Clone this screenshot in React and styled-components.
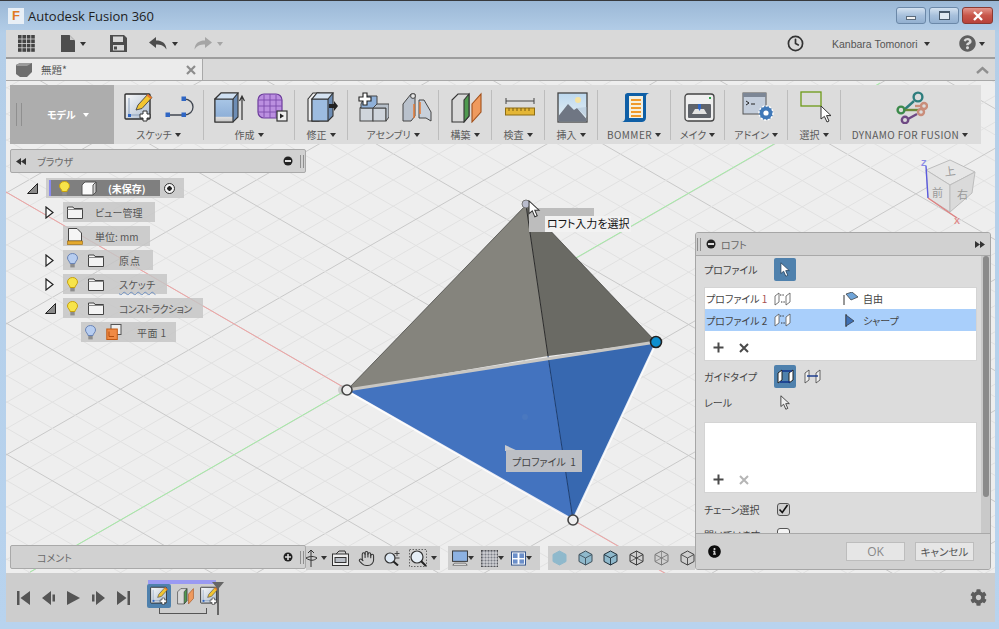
import React from "react";
import styled, { createGlobalStyle } from "styled-components";
import { FaCog, FaInfoCircle, FaQuestionCircle } from "react-icons/fa";
import { Clock, Hand } from "lucide-react";

const JP = `"Noto Sans CJK JP", "Noto Sans", sans-serif`;

const GlobalStyle = createGlobalStyle`
    html, body { margin: 0; padding: 0; background: #b8d3ee; }
    * { box-sizing: border-box; }
    body { font-family: ${JP}; font-feature-settings: "palt"; overflow: hidden; }
`;

/* ---------- small drawings ---------- */

function Caret({ dim }) {
    return <CaretMark $dim={dim} />;
}

function Plus({ dim }) {
    const c = dim ? "#b5b5b5" : "#4a4a4a";
    return (
        <svg width="11" height="11" viewBox="0 0 11 11">
            <path d="M5.5 0.5V10.5M0.5 5.5H10.5" stroke={c} strokeWidth="2" />
        </svg>
    );
}

function Cross({ dim }) {
    const c = dim ? "#b5b5b5" : "#4a4a4a";
    return (
        <svg width="10" height="10" viewBox="0 0 10 10">
            <path d="M1 1L9 9M9 1L1 9" stroke={c} strokeWidth="2" />
        </svg>
    );
}

function MinusDot() {
    return (
        <svg width="10" height="10" viewBox="0 0 10 10">
            <circle cx="5" cy="5" r="4.5" fill="#222" />
            <rect x="2" y="4" width="6" height="2" fill="#ddd" />
        </svg>
    );
}

function PlusDot() {
    return (
        <svg width="10" height="10" viewBox="0 0 10 10">
            <circle cx="5" cy="5" r="4.5" fill="#222" />
            <path d="M5 2V8M2 5H8" stroke="#ddd" strokeWidth="1.6" />
        </svg>
    );
}

function Arrows({ left }) {
    return (
        <svg width="10" height="7" viewBox="0 0 10 7">
            <path d={left ? "M5 0V7L0 3.5ZM10 0V7L5 3.5Z" : "M0 0V7L5 3.5ZM5 0V7L10 3.5Z"} fill="#333" />
        </svg>
    );
}

function Pointer({ fill = "#fff", stroke = "#333", size = 14 }) {
    return (
        <svg width={size} height={size * 1.4} viewBox="0 0 14 20">
            <path d="M1 1V15L4.6 12L7.4 18.5L10 17.4L7.3 11.2H12Z" fill={fill} stroke={stroke} strokeWidth="1.1" />
        </svg>
    );
}

function AppsIcon() {
    const cells = [];
    for (let r = 0; r < 4; r++) {
        for (let c = 0; c < 4; c++) {
            cells.push(<rect key={`${r}-${c}`} x={c * 4.4} y={r * 4.4} width="3.6" height="3.6" fill="#444" />);
        }
    }
    return <svg width="17" height="17" viewBox="0 0 17 17">{cells}</svg>;
}

function FileIcon() {
    return (
        <svg width="14" height="17" viewBox="0 0 14 17">
            <path d="M0 0H8.5L14 5.5V17H0Z" fill="#4d4d4d" />
            <path d="M9 0.5L13.5 5H9Z" fill="#c9c9c9" />
        </svg>
    );
}

function SaveIcon() {
    return (
        <svg width="17" height="17" viewBox="0 0 17 17">
            <path d="M0 0H14L17 3V17H0Z" fill="#4d4d4d" />
            <rect x="3" y="1.5" width="10" height="5.5" fill="#d8d8d8" />
            <rect x="3" y="10" width="11" height="5.5" fill="#d8d8d8" />
            <rect x="4" y="11.5" width="3" height="3" fill="#4d4d4d" />
        </svg>
    );
}

function UndoIcon({ redo, dim }) {
    return (
        <svg width="18" height="13" viewBox="0 0 18 13" style={redo ? { transform: "scaleX(-1)" } : undefined}>
            <path d="M7 0V3.5C13 3.5 17 6 17.5 12.5C15 8.5 12 7.5 7 7.5V11L0 5.5Z" fill={dim ? "#a5a5a5" : "#4d4d4d"} />
        </svg>
    );
}

function SketchIcon({ size = 30 }) {
    return (
        <svg width={size} height={size} viewBox="0 0 30 30">
            <defs>
                <linearGradient id="skf" x1="0" y1="0" x2="1" y2="1">
                    <stop offset="0" stopColor="#fafafa" />
                    <stop offset="1" stopColor="#a9b9cd" />
                </linearGradient>
            </defs>
            <rect x="1" y="2" width="25" height="25" fill="url(#skf)" stroke="#2f2f2f" strokeWidth="1.4" rx="1" />
            <path d="M5 6V23H21" fill="none" stroke="#8aa0bd" strokeWidth="1" />
            <path d="M12 18L14 13L24 2L28 5.5L18 16.5Z" fill="#f2c531" stroke="#444" strokeWidth="0.9" />
            <path d="M24 2L28 5.5L26.5 7L22.5 3.6Z" fill="#e8762c" />
            <rect x="4" y="22" width="3" height="3" fill="#2f66c4" />
            <path d="M19 19H23V22H26V26H23V29H19V26H16V22H19Z" fill="#fff" stroke="#333" strokeWidth="1" />
        </svg>
    );
}

function ArcIcon() {
    return (
        <svg width="32" height="22" viewBox="0 0 32 22">
            <path d="M3 19H19C31 19 31 3 19 3" fill="none" stroke="#404650" strokeWidth="1.3" />
            <rect x="0.5" y="16.5" width="4.5" height="4.5" fill="#2f66c4" />
            <rect x="16.5" y="16.5" width="4.5" height="4.5" fill="#2f66c4" />
            <rect x="16.5" y="0.5" width="4.5" height="4.5" fill="#2f66c4" />
        </svg>
    );
}

function ExtrudeIcon() {
    return (
        <svg width="31" height="31" viewBox="0 0 31 31">
            <defs>
                <linearGradient id="exf" x1="0" y1="0" x2="0" y2="1">
                    <stop offset="0" stopColor="#a9c6e6" />
                    <stop offset="0.75" stopColor="#8fb0d8" />
                    <stop offset="0.8" stopColor="#dcdcdc" />
                    <stop offset="1" stopColor="#c4c4c4" />
                </linearGradient>
            </defs>
            <path d="M1 7L7 1H24V25L19 30H1Z" fill="#6d8db5" stroke="#333" strokeWidth="1.1" />
            <path d="M1 7H19V30H1Z" fill="url(#exf)" stroke="#333" strokeWidth="1.1" />
            <path d="M1 7L7 1H24L19 7Z" fill="#cfe0f2" stroke="#333" strokeWidth="1.1" />
            <path d="M28 28V5M25.5 9L28 4L30.5 9" fill="none" stroke="#333" strokeWidth="1.2" />
        </svg>
    );
}

function MeshIcon() {
    return (
        <svg width="31" height="29" viewBox="0 0 31 29">
            <rect x="1" y="1" width="24" height="24" rx="6" fill="#bb8fe0" stroke="#6d3d9c" strokeWidth="1.2" />
            <path d="M7 2V24M13 1V25M19 2V24M1 7H25M1 13H25M1 19H25" stroke="#7d4cab" strokeWidth="0.9" />
            <rect x="20" y="18" width="10" height="10" fill="#eee" stroke="#333" strokeWidth="1.2" />
            <path d="M23 20.5V25.5L27 23Z" fill="#222" />
        </svg>
    );
}

function PressIcon() {
    return (
        <svg width="31" height="30" viewBox="0 0 31 30">
            <path d="M1 7L6 1H12V29H1Z" fill="#eee" stroke="#333" strokeWidth="1.1" />
            <path d="M5 7L10 1H26V24L21 29H5Z" fill="#6d8db5" stroke="#333" strokeWidth="1.1" />
            <rect x="5" y="7" width="16" height="22" fill="#9dbce0" stroke="#333" strokeWidth="1.1" />
            <path d="M5 7L10 1H26L21 7Z" fill="#d5e3f2" stroke="#333" strokeWidth="1.1" />
            <path d="M22 12H27V9L31 14L27 19V16H22Z" fill="#222" />
        </svg>
    );
}

function ComponentIcon() {
    return (
        <svg width="31" height="30" viewBox="0 0 31 30">
            <path d="M2 16L6 12H17V16H2Z" fill="#dfe6ee" stroke="#444" />
            <rect x="2" y="16" width="13" height="13" fill="#cfd5dc" stroke="#444" />
            <rect x="15" y="16" width="13" height="13" fill="#cfd5dc" stroke="#444" />
            <path d="M15 16L19 12H31V25L28 29V16Z" fill="#b7c0ca" stroke="#444" />
            <path d="M3 12L7 4H19V12L15 16H3Z" fill="#8fb0d8" stroke="#444" />
            <path d="M5 1H9V5H13V9H9V13H5V9H1V5H5Z" fill="#fff" stroke="#222" strokeWidth="1.1" />
        </svg>
    );
}

function JointIcon() {
    return (
        <svg width="30" height="30" viewBox="0 0 30 30">
            <path d="M1 12L9 2H13V24L9 29H1Z" fill="#b9c1cc" stroke="#444" />
            <path d="M17 8L22 8L29 20V29L24 26L17 26Z" fill="#c8d0da" stroke="#444" />
            <circle cx="11" cy="4" r="2.4" fill="#e8e8e8" stroke="#444" />
            <path d="M12 12V26M18 10V22" stroke="#e8762c" strokeWidth="1.4" />
        </svg>
    );
}

function PlaneIcon({ small }) {
    const s = small ? 17 : 31;
    return (
        <svg width={s} height={small ? 22 : 31} viewBox="0 0 31 31">
            <path d="M1 8L7 2H18V24L13 30H1Z" fill="#d9d9d9" stroke="#333" strokeWidth="1.1" />
            <path d="M13 8L18 2V24L13 30Z" fill="#4f9a4f" stroke="#333" strokeWidth="1.1" />
            <path d="M21 12L30 2V20L21 30Z" fill="#ef9a5e" stroke="#a3501a" strokeWidth="1.1" />
        </svg>
    );
}

function RulerIcon() {
    return (
        <svg width="30" height="18" viewBox="0 0 30 18">
            <path d="M1 0V6M1 3H29M29 0V6" stroke="#444" strokeWidth="1" />
            <rect x="0.5" y="10" width="29" height="7" fill="#e4b636" stroke="#8e6d12" />
            <path d="M4 10V13M8 10V13M12 10V13M16 10V13M20 10V13M24 10V13" stroke="#7b5d10" />
        </svg>
    );
}

function ImageIcon() {
    return (
        <svg width="31" height="31" viewBox="0 0 31 31">
            <defs>
                <linearGradient id="sky" x1="0" y1="0" x2="0" y2="1">
                    <stop offset="0" stopColor="#bcd8ee" />
                    <stop offset="1" stopColor="#e9f1f4" />
                </linearGradient>
            </defs>
            <rect x="1" y="1" width="29" height="29" fill="url(#sky)" stroke="#444" strokeWidth="1.3" />
            <circle cx="21" cy="8" r="3" fill="#f6e3a0" />
            <path d="M1.5 29.5V24L11 12L17 18L20 16L29.5 27V29.5Z" fill="#6f7683" />
            <path d="M20 16L29.5 25V15Z" fill="#b3c6d8" opacity="0.6" />
        </svg>
    );
}

function ScrollIcon() {
    return (
        <svg width="32" height="31" viewBox="0 0 32 31">
            <path d="M5 26V4C5 1 7 1 9 1H31C27 1 26 3 26 5V25C26 29 24 30 21 30H1C4 30 5 28 5 26Z" fill="#0f5fa6" />
            <rect x="9" y="4" width="14" height="22" fill="#f5f0df" />
            <path d="M11 8H21M11 12H21M11 16H21M11 20H21M11 24H21" stroke="#f09a2b" strokeWidth="2" />
        </svg>
    );
}

function PrinterIcon() {
    return (
        <svg width="31" height="29" viewBox="0 0 31 29">
            <rect x="1" y="1" width="29" height="27" rx="3" fill="#efefef" stroke="#444" strokeWidth="1.3" />
            <rect x="4" y="11" width="23" height="14" rx="1" fill="#5f636a" />
            <path d="M8 21L11 16H20L23 21Z" fill="#e2e2e2" />
            <rect x="14" y="11" width="3" height="5" fill="#2f66c4" />
            <path d="M14 15L15.5 18L17 15Z" fill="#2f66c4" />
            <rect x="25" y="4" width="2" height="2" fill="#2fa14a" />
        </svg>
    );
}

function AddinIcon() {
    return (
        <svg width="32" height="30" viewBox="0 0 32 30">
            <rect x="1" y="1" width="23" height="21" fill="#c4cedc" stroke="#555" />
            <rect x="1" y="1" width="23" height="4" fill="#7d8796" />
            <path d="M4 9L7 11L4 13M9 12H13" fill="none" stroke="#222" />
            <circle cx="24" cy="21" r="7" fill="#3f78b8" />
            <circle cx="24" cy="21" r="7" fill="none" stroke="#fff" strokeDasharray="2 1.6" strokeWidth="1.4" />
            <circle cx="24" cy="21" r="2.6" fill="#fff" />
        </svg>
    );
}

function SelectIcon() {
    return (
        <svg width="32" height="33" viewBox="0 0 32 33">
            <rect x="1" y="1" width="20" height="14" fill="none" stroke="#6d9a18" strokeWidth="1.3" />
            <path d="M21 15V28L24.4 25.4L27 31L29 30L26.5 24.6H31Z" fill="#fff" stroke="#333" />
        </svg>
    );
}

function DynamoIcon() {
    return (
        <svg width="33" height="33" viewBox="0 0 33 33">
            <g fill="none" strokeWidth="2.4">
                <path d="M19 10L9 19" stroke="#2e7d7d" />
                <circle cx="23" cy="6" r="4.4" stroke="#2e7d7d" />
                <path d="M9 19H24" stroke="#6d8a3a" />
                <circle cx="6" cy="19" r="3.4" stroke="#3c8a4a" />
                <path d="M26 15H20" stroke="#c98d7a" />
                <circle cx="29" cy="15" r="3" stroke="#c98d7a" />
                <circle cx="26" cy="21" r="3" stroke="#c98d7a" />
                <path d="M22 23L13 28" stroke="#6f4a84" />
                <circle cx="10" cy="29" r="3.2" stroke="#6f4a84" />
            </g>
        </svg>
    );
}

function Bulb({ on }) {
    const f = on ? "#f7e44a" : "#b7cdf0";
    const s = on ? "#c7a10f" : "#6a84b5";
    return (
        <svg width="11" height="15" viewBox="0 0 11 15">
            <path d="M5.5 0.5C8.5 0.5 10.5 2.5 10.5 5C10.5 7.5 8 8.5 8 10.5H3C3 8.5 0.5 7.5 0.5 5C0.5 2.5 2.5 0.5 5.5 0.5Z" fill={f} stroke={s} />
            <rect x="3.3" y="11" width="4.4" height="3.4" fill="#8d8d8d" />
        </svg>
    );
}

function Folder() {
    return (
        <svg width="16" height="13" viewBox="0 0 16 13">
            <path d="M0.5 12.5V1H6L7 2.5H15.5V12.5Z" fill="#f3f3f3" stroke="#444" />
            <path d="M0.5 3.5H15.5" stroke="#888" />
        </svg>
    );
}

function TreeCube() {
    return (
        <svg width="16" height="15" viewBox="0 0 16 15">
            <path d="M1 4L4 1H15V11L12 14H1Z" fill="#fafafa" stroke="#555" />
            <path d="M12 4L15 1V11L12 14Z" fill="#cfcfcf" stroke="#555" />
        </svg>
    );
}

function Units() {
    return (
        <svg width="16" height="17" viewBox="0 0 16 17">
            <path d="M1.5 0.5H10L14.5 5V13H1.5Z" fill="#f5f5f5" stroke="#444" />
            <rect x="0.5" y="13" width="15" height="3.5" fill="#e4a92d" stroke="#a0701a" strokeWidth="0.7" />
        </svg>
    );
}

function PlaneTree() {
    return (
        <svg width="16" height="16" viewBox="0 0 16 16">
            <rect x="5" y="0.5" width="10" height="10" fill="#eee" stroke="#555" />
            <rect x="0.8" y="5" width="10.5" height="10.5" fill="#f08a44" stroke="#c25a14" />
            <path d="M3 7.5V12.5H8" fill="none" stroke="#b34f10" />
        </svg>
    );
}

function Expander({ open }) {
    if (open) {
        return (
            <svg width="11" height="11" viewBox="0 0 11 11">
                <path d="M0.5 10.5L10.5 0.5V10.5Z" fill="#8a8a8a" stroke="#222" />
            </svg>
        );
    }
    return (
        <svg width="9" height="13" viewBox="0 0 9 13">
            <path d="M1 1L8 6.5L1 12Z" fill="#fafafa" stroke="#222" strokeWidth="1.2" />
        </svg>
    );
}

function LoftFaces() {
    return (
        <svg width="17" height="14" viewBox="0 0 17 14">
            <path d="M1 4L5 1V10L1 13ZM12 4L16 1V10L12 13Z" fill="#fff" stroke="#555" strokeWidth="0.8" />
            <path d="M6 3H10M7 10H11" stroke="#333" strokeDasharray="1.4 1" />
        </svg>
    );
}

function TangentFree() {
    return (
        <svg width="16" height="14" viewBox="0 0 16 14">
            <path d="M1 3V13" stroke="#333" />
            <path d="M3 2L9 0L15 5L8 8Z" fill="#6fa4d8" stroke="#333" strokeWidth="0.7" />
        </svg>
    );
}

function TangentSharp() {
    return (
        <svg width="14" height="15" viewBox="0 0 14 15">
            <path d="M3 1V14" stroke="#333" />
            <path d="M3 2L11 8L3 13Z" fill="#3f70b5" stroke="#333" strokeWidth="0.7" />
        </svg>
    );
}

function RailsGuide() {
    return (
        <svg width="17" height="17" viewBox="0 0 17 17">
            <path d="M1 5L5 2V12L1 15ZM12 5L16 2V12L12 15Z" fill="#fff" stroke="#222" />
            <path d="M5 3H15M3 14H13" stroke="#12348c" strokeWidth="1.4" />
        </svg>
    );
}

function CenterGuide() {
    return (
        <svg width="17" height="15" viewBox="0 0 17 15">
            <path d="M1 4L5 1V11L1 14ZM12 4L16 1V11L12 14Z" fill="#eee" stroke="#444" strokeWidth="0.8" />
            <path d="M3 7H14" stroke="#12348c" strokeWidth="1.4" />
        </svg>
    );
}

function LookAt() {
    return (
        <svg width="17" height="16" viewBox="0 0 17 16">
            <rect x="0.5" y="4" width="16" height="11.5" fill="#eee" stroke="#333" />
            <rect x="3" y="7.5" width="11" height="5" fill="#b9bec6" stroke="#333" />
            <path d="M4 4L7 1H13L14 4" fill="none" stroke="#333" />
        </svg>
    );
}

function Orbit() {
    return (
        <svg width="11" height="19" viewBox="0 0 11 19">
            <path d="M5 1V18M2 4L5 1L8 4M0 9C4 7 8 7 11 9C8 12 4 12 0 9Z" fill="none" stroke="#333" />
        </svg>
    );
}

function ZoomPlus() {
    return (
        <svg width="16" height="16" viewBox="0 0 16 16">
            <circle cx="6" cy="8" r="5" fill="#dfeaf5" stroke="#333" strokeWidth="1.2" />
            <path d="M9.5 11.5L14 15.5" stroke="#222" strokeWidth="2" />
            <path d="M13 1V6M10.5 3.5H15.5M10.5 8H15.5" stroke="#444" />
        </svg>
    );
}

function ZoomFit() {
    return (
        <svg width="18" height="18" viewBox="0 0 18 18">
            <rect x="0.5" y="0.5" width="17" height="17" fill="none" stroke="#666" strokeDasharray="1.5 1.5" />
            <circle cx="8" cy="8" r="6" fill="#e5eef6" stroke="#333" strokeWidth="1.2" />
            <path d="M12 12L17 17" stroke="#222" strokeWidth="2" />
        </svg>
    );
}

function Monitor() {
    return (
        <svg width="16" height="18" viewBox="0 0 20 19">
            <rect x="0.7" y="0.7" width="18.6" height="13" fill="#8db2e2" stroke="#333" strokeWidth="1.2" />
            <path d="M3 16H17L19 18.5H1Z" fill="#fff" stroke="#333" strokeWidth="0.8" />
        </svg>
    );
}

function GridDisplay() {
    const lines = [];
    for (let i = 3; i < 17; i += 3) {
        lines.push(<path key={i} d={`M${i} 0V17M0 ${i}H17`} stroke="#fff" strokeWidth="0.7" />);
    }
    return (
        <svg width="17" height="17" viewBox="0 0 17 17">
            <rect width="17" height="17" fill="#7c7f87" stroke="#333" />
            {lines}
        </svg>
    );
}

function Viewports() {
    return (
        <svg width="15" height="15" viewBox="0 0 16 15">
            <rect x="0.5" y="0.5" width="15" height="14" fill="#fff" stroke="#2c4f8a" />
            <rect x="2" y="2" width="5" height="5" fill="#6b8fca" />
            <rect x="9" y="2" width="5" height="5" fill="#6b8fca" />
            <rect x="2" y="8.5" width="5" height="4.5" fill="#6b8fca" />
            <rect x="9" y="8.5" width="5" height="4.5" fill="#6b8fca" />
        </svg>
    );
}

function VisualCube({ fill, edge, hidden }) {
    return (
        <svg width="15" height="16" viewBox="0 0 15 16">
            <path d="M7.5 1L14 4.5V11.5L7.5 15L1 11.5V4.5Z" fill={fill} stroke={edge} strokeWidth="1" />
            <path d="M1 4.5L7.5 8L14 4.5M7.5 8V15" fill="none" stroke={edge} strokeWidth="0.9" />
            {hidden && <path d="M7.5 1V8M1 11.5L7.5 8L14 11.5" fill="none" stroke={edge} strokeWidth="0.7" />}
        </svg>
    );
}

function Playback({ d }) {
    return (
        <svg width="13" height="14" viewBox="0 0 13 14">
            <path d={d} fill="#555" />
        </svg>
    );
}

/* ---------- viewport drawing ---------- */

function gridLines() {
    const items = [];
    const red = 188.5;
    const green = 589.5;
    const step = 26.2;
    for (let k = -40; k <= 40; k++) {
        const major = k % 5 === 0;
        const stroke = major ? "#c9c9c9" : "#e1e1e1";
        const a = red + k * step;
        const b = green + k * step;
        items.push(<line key={`a${k}`} x1="6" y1={a + 0.578 * 6} x2="995" y2={a + 0.578 * 995} stroke={stroke} />);
        items.push(<line key={`b${k}`} x1="6" y1={b - 0.575 * 6} x2="995" y2={b - 0.575 * 995} stroke={stroke} />);
    }
    return items;
}

function Scene() {
    return (
        <SceneSvg viewBox="6 81 989 492">
            {gridLines()}
            <line x1="6" y1="192" x2="680" y2="582" stroke="#f2a3a3" />
            <line x1="30" y1="572" x2="880" y2="83" stroke="#a5eda5" />

            <path d="M347 390L526 205L548 356Z" fill="#85847d" />
            <path d="M526 205L656 342L548 356Z" fill="#6a6a64" />
            <path d="M347 390L526 205L656 342" fill="none" stroke="#3c3c3a" strokeWidth="0.7" />
            <path d="M347 390L548 358L573 520Z" fill="#4373bf" />
            <path d="M548 358L656 342L573 520Z" fill="#3768b0" />
            <path d="M347 391L573 520L656 343" fill="none" stroke="#fff" strokeWidth="2.2" opacity="0.85" />
            <path d="M526 205L548 356" stroke="#2b2b2b" strokeWidth="1" />
            <path d="M548 356L573 520" stroke="#1c3d70" strokeWidth="1" />
            <path d="M347 390L656 342" stroke="#c9c7c3" strokeWidth="3" />
            <circle cx="525" cy="417" r="3" fill="#4a78bf" />

            <circle cx="526" cy="204" r="4" fill="#b9bccd" stroke="#777" />
            <circle cx="343" cy="390" r="5" fill="#bbb" opacity="0.6" />
            <circle cx="347" cy="390" r="5" fill="#eee" stroke="#444" strokeWidth="1.6" />
            <circle cx="573" cy="520" r="5" fill="#eee" stroke="#444" strokeWidth="1.6" />
            <circle cx="656" cy="342" r="5.5" fill="#0e8fd0" stroke="#222" strokeWidth="1.6" />

            <path d="M505 445L518 451H505Z" fill="#c8cacf" />

            {/* view cube */}
            <path d="M926 170L950 160L975 172L950 185Z" fill="#e6e6e6" stroke="#bdbdbd" />
            <path d="M926 170L950 185V212L928 198Z" fill="#e2e2e2" stroke="#bdbdbd" />
            <path d="M950 185L975 172L972 193L950 212Z" fill="#dadada" stroke="#bdbdbd" />
            <path d="M926 166L928 198" stroke="#5a5ae0" strokeWidth="1.4" />
            <path d="M928 198L957 218" stroke="#e08080" strokeWidth="1.4" />
            <CubeText x="945" y="176" transform="rotate(-8 945 176)">上</CubeText>
            <CubeText x="932" y="197">前</CubeText>
            <CubeText x="957" y="199">右</CubeText>
            <AxisText x="921" y="166" fill="#8a8ae6">Z</AxisText>
            <AxisText x="954" y="224" fill="#e08a8a">X</AxisText>
        </SceneSvg>
    );
}

/* ---------- data ---------- */

const toolGroups = [
    { label: "スケッチ", width: 89, icons: [<SketchIcon key="a" />, <ArcIcon key="b" />], gap: 11 },
    { label: "作成", width: 90, icons: [<ExtrudeIcon key="a" />, <MeshIcon key="b" />], gap: 12 },
    { label: "修正", width: 52, icons: [<PressIcon key="a" />] },
    { label: "アセンブリ", width: 90, icons: [<ComponentIcon key="a" />, <JointIcon key="b" />], gap: 13 },
    { label: "構築", width: 52, icons: [<PlaneIcon key="a" />] },
    { label: "検査", width: 52, icons: [<RulerIcon key="a" />] },
    { label: "挿入", width: 52, icons: [<ImageIcon key="a" />] },
    { label: "BOMMER", width: 72, icons: [<ScrollIcon key="a" />], latin: true },
    { label: "メイク", width: 53, icons: [<PrinterIcon key="a" />] },
    { label: "アドイン", width: 62, icons: [<AddinIcon key="a" />] },
    { label: "選択", width: 52, icons: [<SelectIcon key="a" />] },
    { label: "DYNAMO FOR FUSION", width: 138, icons: [<DynamoIcon key="a" />], latin: true },
];

const treeRows = [
    { level: 0, expander: "open", root: true },
    { level: 1, expander: "closed", icons: [<Folder key="f" />], label: "ビュー管理", lead: 2, end: 13 },
    { level: 1, icons: [<Units key="f" />], label: "単位: mm", lead: 2, end: 11 },
    { level: 1, expander: "closed", icons: [<Bulb key="b" />, <Folder key="f" />], label: "原点", track: 1, end: 12 },
    { level: 1, expander: "closed", icons: [<Bulb key="b" on />, <Folder key="f" />], label: "スケッチ", track: 0.3, wavy: true, end: 11 },
    { level: 1, expander: "open", icons: [<Bulb key="b" on />, <Folder key="f" />], label: "コンストラクション", track: -0.6, end: 11 },
    { level: 2, icons: [<Bulb key="b" />, <PlaneTree key="f" />], label: "平面 1", track: 0.4, end: 10 },
];

const visualCubes = [
    { fill: "#8fb9cc", edge: "#8fb9cc" },
    { fill: "#8fb9cc", edge: "#3d4f5a" },
    { fill: "#8fb9cc", edge: "#1f2f3a" },
    { fill: "none", edge: "#333", hidden: true },
    { fill: "none", edge: "#777", hidden: true },
    { fill: "none", edge: "#444" },
];

/* ---------- page ---------- */

export default function App() {
    return (
        <Window>
            <GlobalStyle />
            <TitleBar>
                <AppBadge>F</AppBadge>
                <AppName>Autodesk Fusion 360</AppName>
                <WinButtons>
                    <WinButton>
                        <MinGlyph />
                    </WinButton>
                    <WinButton>
                        <MaxGlyph />
                    </WinButton>
                    <WinButton $close>
                        <svg width="12" height="10" viewBox="0 0 12 10">
                            <path d="M2 1L10 9M10 1L2 9" stroke="#fff" strokeWidth="2.4" />
                        </svg>
                    </WinButton>
                </WinButtons>
            </TitleBar>

            <Client>
                <MenuRow>
                    <MenuCell $w={43}><AppsIcon /></MenuCell>
                    <MenuCell $w={49}><FileIcon /><Caret /></MenuCell>
                    <MenuCell $w={39}><SaveIcon /></MenuCell>
                    <MenuCell $w={45}><UndoIcon /><Caret /></MenuCell>
                    <MenuCell $w={40}><UndoIcon redo dim /><Caret dim /></MenuCell>
                    <MenuRight>
                        <Clock size={17} color="#333" strokeWidth={2.4} />
                        <UserName>Kanbara Tomonori</UserName>
                        <Caret />
                        <HelpCell>
                            <FaQuestionCircle size={17} color="#5f5f5f" />
                            <Caret />
                        </HelpCell>
                    </MenuRight>
                </MenuRow>

                <TabRow>
                    <DocTab>
                        <svg width="16" height="14" viewBox="0 0 16 14">
                            <path d="M0 2L4 0H16V9L11 14H4L0 11Z" fill="#6e6e6e" />
                            <path d="M0 2L4 0H16L11 3H1Z" fill="#9b9b9b" />
                        </svg>
                        <DocName>無題*</DocName>
                        <DocClose>
                            <svg width="10" height="10" viewBox="0 0 10 10">
                                <path d="M1 1L9 9M9 1L1 9" stroke="#8c8c8c" strokeWidth="2.2" />
                            </svg>
                        </DocClose>
                    </DocTab>
                    <TabFill>
                        <svg width="13" height="8" viewBox="0 0 13 8">
                            <path d="M1 7L6.5 2L12 7" fill="none" stroke="#8f8f8f" strokeWidth="2.4" />
                        </svg>
                    </TabFill>
                </TabRow>

                <Viewport>
                    <Scene />

                    <ToolBar>
                        <ModeButton>
                            <Grip />
                            <ModeLabel>モデル</ModeLabel>
                            <Caret />
                        </ModeButton>
                        {toolGroups.map((g, i) => (
                            <React.Fragment key={g.label}>
                                {i > 0 && <ToolSep />}
                                <ToolGroup $w={g.width}>
                                    <ToolIcons $gap={g.gap}>{g.icons}</ToolIcons>
                                    <ToolLabel $latin={g.latin}>
                                        {g.label}
                                        <Caret />
                                    </ToolLabel>
                                </ToolGroup>
                            </React.Fragment>
                        ))}
                    </ToolBar>

                    <BrowserPane>
                        <DockBar>
                            <Arrows left />
                            <DockTitle>ブラウザ</DockTitle>
                            <DockEnd>
                                <MinusDot />
                                <Grip />
                            </DockEnd>
                        </DockBar>
                        <Tree>
                            {treeRows.map((row, i) =>
                                row.root ? (
                                    <TreeRow key={i} $level={0}>
                                        <ExpanderSlot><Expander open /></ExpanderSlot>
                                        <RootChip>
                                            <RootInner>
                                                <Bulb on />
                                                <TreeCube />
                                                <RootName>(未保存)</RootName>
                                            </RootInner>
                                            <RadioDot />
                                        </RootChip>
                                    </TreeRow>
                                ) : (
                                    <TreeRow key={i} $level={row.level}>
                                        <ExpanderSlot>
                                            {row.expander && <Expander open={row.expander === "open"} />}
                                        </ExpanderSlot>
                                        <TreeChip $end={row.end}>
                                            {row.icons}
                                            <TreeName $wavy={row.wavy} $lead={row.lead} $track={row.track}>
                                                {row.label}
                                            </TreeName>
                                        </TreeChip>
                                    </TreeRow>
                                )
                            )}
                        </Tree>
                    </BrowserPane>

                    <BottomRow>
                        <CommentBar>
                            <DockTitle>コメント</DockTitle>
                            <DockEnd>
                                <PlusDot />
                                <Grip />
                            </DockEnd>
                        </CommentBar>
                        <NavGroup $w={134} $gap={9} $caret={-5} $start={0}>
                            <Orbit /><OrbitCaret />
                            <LookAt />
                            <Hand size={17} color="#333" strokeWidth={1.5} />
                            <ZoomPlus />
                            <ZoomFit /><Caret />
                        </NavGroup>
                        <NavGroup $w={92} $gap={7} $caret={-7} $start={4}>
                            <Monitor /><Caret />
                            <GridDisplay /><Caret />
                            <Viewports /><Caret />
                        </NavGroup>
                        <NavGroup $w={147} $gap={10.5} $start={4}>
                            {visualCubes.map((c, i) => (
                                <VisualCube key={i} {...c} />
                            ))}
                        </NavGroup>
                    </BottomRow>

                    <LoftPanel>
                        <LoftHeader>
                            <Grip />
                            <MinusDot />
                            <LoftTitle>ロフト</LoftTitle>
                            <Arrows />
                        </LoftHeader>
                        <LoftBody>
                            <FormRow $top={2} $h={23}>
                                <FormLabel>プロファイル</FormLabel>
                                <SquareButton $active>
                                    <Pointer size={11} stroke="#27445f" />
                                </SquareButton>
                            </FormRow>
                            <WhiteList $top={6} $h={74}>
                                <ListRow $h={21}>
                                    <ListName>プロファイル&nbsp;<RedNum>1</RedNum></ListName>
                                    <LoftFaces />
                                    <TangentFree />
                                    <ListType>自由</ListType>
                                </ListRow>
                                <ListRow $h={22} $selected>
                                    <ListName>プロファイル&nbsp;2</ListName>
                                    <LoftFaces />
                                    <TangentSharp />
                                    <ListType>シャープ</ListType>
                                </ListRow>
                                <ListTools>
                                    <Plus />
                                    <Cross />
                                </ListTools>
                            </WhiteList>
                            <FormRow $top={4} $h={23}>
                                <FormLabel>ガイドタイプ</FormLabel>
                                <SquareButton $active><RailsGuide /></SquareButton>
                                <SquareButton><CenterGuide /></SquareButton>
                            </FormRow>
                            <FormRow $top={3} $h={23}>
                                <FormLabel>レール</FormLabel>
                                <SquareButton><Pointer size={11} fill="#eee" /></SquareButton>
                            </FormRow>
                            <WhiteList $top={8} $h={71}>
                                <ListTools $dim>
                                    <Plus />
                                    <Cross dim />
                                </ListTools>
                            </WhiteList>
                            <FormRow $top={7} $h={18}>
                                <FormLabel>チェーン選択</FormLabel>
                                <CheckBox $checked>
                                    <svg width="11" height="10" viewBox="0 0 11 10">
                                        <path d="M1.5 5.5L4.3 8.5L9.5 1" fill="none" stroke="#111" strokeWidth="1.6" />
                                    </svg>
                                </CheckBox>
                            </FormRow>
                            <FormRow $top={7} $h={18}>
                                <FormLabel>開いています</FormLabel>
                                <CheckBox />
                            </FormRow>
                            <ScrollTrack>
                                <ScrollThumb />
                            </ScrollTrack>
                        </LoftBody>
                        <LoftFooter>
                            <FaInfoCircle size={13} color="#0d0d0d" />
                            <FooterButtons>
                                <DialogButton $disabled>OK</DialogButton>
                                <DialogButton>キャンセル</DialogButton>
                            </FooterButtons>
                        </LoftFooter>
                    </LoftPanel>

                    <HoverLabel>
                        <HoverTip>ロフト入力を選択</HoverTip>
                    </HoverLabel>
                    <CursorMark>
                        <Pointer size={13} />
                    </CursorMark>
                    <ProfileTag>プロファイル&nbsp;&nbsp;1</ProfileTag>
                </Viewport>

                <Timeline>
                    <PlayControls>
                        <Playback d="M0 0H2.5V14H0ZM13 0V14L3.5 7Z" />
                        <Playback d="M9 0V14L0 7ZM10.5 3.5H13V10.5H10.5Z" />
                        <Playback d="M0 0L13 7L0 14Z" />
                        <Playback d="M4 0V14L13 7ZM0 3.5H2.5V10.5H0Z" />
                        <Playback d="M0 0L9.5 7L0 14ZM10.5 0H13V14H10.5Z" />
                    </PlayControls>
                    <TimelineTrack>
                        <GroupBar />
                        <TimelineItems>
                            <TimelineItem $active><SketchIcon size={19} /></TimelineItem>
                            <TimelineItem><PlaneIcon small /></TimelineItem>
                            <TimelineItem><SketchIcon size={19} /></TimelineItem>
                        </TimelineItems>
                        <GroupBracket />
                        <Marker>
                            <svg width="12" height="33" viewBox="0 0 12 33">
                                <path d="M0 0H12L7 6V33H5V6Z" fill="#666" />
                            </svg>
                        </Marker>
                    </TimelineTrack>
                    <FaCog size={17} color="#5c5c5c" />
                </Timeline>
            </Client>
        </Window>
    );
}

/* ---------- styles ---------- */

const Window = styled.div`
    width: 999px;
    height: 629px;
    display: flex;
    flex-direction: column;
    overflow: hidden;
    background: linear-gradient(#9bb8d6 0, #b4cee8 32px, #b8d3ee 100%);
    border-top: 1px solid #37393c;
`;

const TitleBar = styled.div`
    height: 29px;
    flex: none;
    display: flex;
    align-items: center;
    padding: 0 6px 0 8px;
`;

const AppBadge = styled.div`
    width: 16px;
    height: 16px;
    background: #e8eff6;
    color: #e07a22;
    font: 700 13px/16px "Liberation Sans", sans-serif;
    text-align: center;
`;

const AppName = styled.div`
    margin-left: 4px;
    font: 13px "Open Sans", sans-serif;
    color: #1d1d1d;
`;

const WinButtons = styled.div`
    margin-left: auto;
    display: flex;
    gap: 3px;
`;

const WinButton = styled.div`
    width: ${(p) => (p.$close ? 31 : 30)}px;
    height: 17px;
    display: flex;
    align-items: center;
    justify-content: center;
    border-radius: 3px;
    border: 1px solid ${(p) => (p.$close ? "#8a3a32" : "#6b88a8")};
    background: ${(p) =>
        p.$close
            ? "linear-gradient(#e3968c, #c8564a 50%, #b8423a)"
            : "linear-gradient(#d4e2f0, #a7c0dc 50%, #93b0d0)"};
`;

const MinGlyph = styled.div`
    width: 10px;
    height: 4px;
    margin-top: 5px;
    background: #f2f2f2;
    border: 1px solid #5b6b7c;
`;

const MaxGlyph = styled.div`
    width: 11px;
    height: 9px;
    border: 1px solid #47586a;
    border-top-width: 2px;
    background: #dfe8f1;
`;

const Client = styled.div`
    flex: 1;
    min-height: 0;
    margin: 0 4px 7px 6px;
    display: flex;
    flex-direction: column;
`;

const MenuRow = styled.div`
    height: 29px;
    flex: none;
    display: flex;
    align-items: center;
    padding-left: 12px;
    background: #d9d9d9;
    border-bottom: 2px solid #9d9d9d;
`;

const MenuCell = styled.div`
    width: ${(p) => p.$w}px;
    display: flex;
    align-items: center;
    gap: 5px;
`;

const MenuRight = styled.div`
    margin-left: auto;
    display: flex;
    align-items: center;
    padding-right: 10px;
`;

const UserName = styled.span`
    margin-left: 28px;
    margin-right: 6px;
    width: 86px;
    font: 10.5px "Liberation Sans", sans-serif;
    color: #555;
    white-space: nowrap;
`;

const HelpCell = styled.div`
    margin-left: 29px;
    display: flex;
    align-items: center;
    gap: 3px;
`;

const CaretMark = styled.span`
    display: inline-block;
    flex: none;
    width: 0;
    height: 0;
    border-left: 3.5px solid transparent;
    border-right: 3.5px solid transparent;
    border-top: 4px solid ${(p) => (p.$dim ? "#a5a5a5" : "#333")};
`;

const TabRow = styled.div`
    height: 22px;
    flex: none;
    display: flex;
    background: #d9d9d9;
    border-bottom: 1px solid #a8a8a8;
`;

const DocTab = styled.div`
    width: 197px;
    display: flex;
    align-items: center;
    padding: 0 6px 0 10px;
    background: #ebebeb;
    border-right: 1px solid #a8a8a8;
`;

const DocName = styled.span`
    margin-left: 9px;
    font-size: 10.5px;
    color: #555;
`;

const DocClose = styled.span`
    margin-left: auto;
    display: flex;
`;

const TabFill = styled.div`
    flex: 1;
    display: flex;
    align-items: center;
    justify-content: flex-end;
    padding-right: 6px;
`;

const Viewport = styled.div`
    position: relative;
    flex: 1;
    min-height: 0;
    background: #eeeeee;
    overflow: hidden;
`;

const SceneSvg = styled.svg`
    position: absolute;
    inset: 0;
    width: 100%;
    height: 100%;
`;

const CubeText = styled.text`
    font-family: ${JP};
    font-size: 11px;
    fill: #9a9a9a;
`;

const AxisText = styled.text`
    font: 700 9px "Liberation Sans", sans-serif;
`;

const ToolBar = styled.div`
    position: absolute;
    left: 4px;
    top: 4px;
    width: 971px;
    height: 59px;
    display: flex;
    align-items: center;
    background: #dcdcdc;
`;

const ModeButton = styled.div`
    width: 104px;
    height: 100%;
    flex: none;
    display: flex;
    align-items: center;
    gap: 7px;
    padding-left: 6px;
    background: #adadad;
    color: #fff;
    ${CaretMark} {
        border-top-color: #fff;
    }
`;

const ModeLabel = styled.span`
    margin-left: 18px;
    font-size: 10px;
    font-weight: 700;
`;

const Grip = styled.span`
    width: 4px;
    height: 13px;
    flex: none;
    border-left: 1px solid #8f8f8f;
    border-right: 1px solid #8f8f8f;
    ${ModeButton} & {
        height: 23px;
        width: 6px;
    }
`;

const ToolSep = styled.div`
    width: 1px;
    height: 50px;
    flex: none;
    background: #bdbdbd;
`;

const ToolGroup = styled.div`
    width: ${(p) => p.$w}px;
    height: 100%;
    flex: none;
    display: flex;
    flex-direction: column;
    align-items: center;
`;

const ToolIcons = styled.div`
    height: 44px;
    display: flex;
    align-items: center;
    padding-left: 3px;
    gap: ${(p) => p.$gap || 0}px;
`;

const ToolLabel = styled.div`
    display: flex;
    align-items: center;
    gap: 3px;
    font-size: 10px;
    line-height: 12px;
    letter-spacing: ${(p) => (p.$latin ? "0.4px" : "0")};
    color: #5a5a5a;
    white-space: nowrap;
`;

const BrowserPane = styled.div`
    position: absolute;
    left: 4px;
    top: 68px;
    width: 296px;
`;

const DockBar = styled.div`
    height: 24px;
    display: flex;
    align-items: center;
    padding: 0 1px 0 5px;
    background: #d1d1d1;
    border: 1px solid #a9a9a9;
    border-radius: 2px;
`;

const DockTitle = styled.span`
    margin-left: 11px;
    font-size: 10px;
    color: #6a6a6a;
`;

const DockEnd = styled.div`
    margin-left: auto;
    display: flex;
    align-items: center;
    gap: 7px;
`;

const Tree = styled.div`
    margin-top: 5px;
    margin-left: 17px;
    display: flex;
    flex-direction: column;
    gap: 4px;
`;

const TreeRow = styled.div`
    height: 20px;
    display: flex;
    align-items: center;
    padding-left: ${(p) => p.$level * 18}px;
`;

const ExpanderSlot = styled.div`
    width: 18px;
    flex: none;
    display: flex;
    align-items: center;
`;

const TreeChip = styled.div`
    height: 20px;
    display: flex;
    align-items: center;
    gap: 10px;
    padding: 0 ${(p) => p.$end}px 0 4px;
    background: rgba(196, 196, 196, 0.82);
`;

const TreeName = styled.span`
    margin-left: ${(p) => p.$lead ?? 5}px;
    font-size: 10px;
    letter-spacing: ${(p) => p.$track ?? 0}px;
    color: #555;
    white-space: nowrap;
    ${(p) =>
        p.$wavy &&
        `text-decoration: underline wavy #6d8fc0 1px; text-underline-offset: 2px;`}
`;

const RootChip = styled.div`
    height: 20px;
    margin-left: 1px;
    display: flex;
    align-items: center;
    gap: 4px;
    padding: 0 9px 0 3px;
    background: rgba(196, 196, 196, 0.82);
`;

const RootInner = styled.div`
    width: 111px;
    height: 16px;
    display: flex;
    align-items: center;
    gap: 11px;
    padding-left: 8px;
    background: #7f7f7f;
    border-left: 2px solid #8888ee;
`;

const RootName = styled.span`
    font-size: 10px;
    font-weight: 700;
    color: #fff;
    white-space: nowrap;
`;

const RadioDot = styled.span`
    width: 11px;
    height: 11px;
    border: 1.5px solid #333;
    border-radius: 50%;
    background: radial-gradient(circle, #222 0 2px, #f4f4f4 2.5px);
`;

const BottomRow = styled.div`
    position: absolute;
    left: 4px;
    bottom: 3px;
    display: flex;
    align-items: flex-end;
`;

const CommentBar = styled(DockBar)`
    width: 296px;
    margin-bottom: 1px;
    padding-left: 15px;
`;

const NavGroup = styled.div`
    width: ${(p) => p.$w}px;
    height: 24px;
    margin-right: 8px;
    display: flex;
    align-items: center;
    gap: ${(p) => p.$gap}px;
    padding-left: ${(p) => p.$start}px;
    flex: none;
    background: #cfcfcf;
    & > span {
        margin-left: ${(p) => p.$caret || 0}px;
    }
`;

const OrbitCaret = styled(CaretMark)`
    margin-right: -4px;
`;

const LoftPanel = styled.div`
    position: absolute;
    left: 689px;
    top: 151px;
    width: 296px;
    height: 338px;
    display: flex;
    flex-direction: column;
    border: 1px solid #a6a6a6;
    border-radius: 3px;
    overflow: hidden;
    background: #dcdcdc;
`;

const LoftHeader = styled.div`
    height: 23px;
    flex: none;
    display: flex;
    align-items: center;
    gap: 5px;
    padding: 0 5px 0 1px;
    background: #d1d1d1;
    border-bottom: 1px solid #a9a9a9;
`;

const LoftTitle = styled.span`
    margin-right: auto;
    font-size: 10px;
    color: #666;
`;

const LoftBody = styled.div`
    position: relative;
    flex: 1;
    min-height: 0;
    overflow: hidden;
    padding-left: 8px;
`;

const FormRow = styled.div`
    height: ${(p) => p.$h}px;
    margin-top: ${(p) => p.$top}px;
    display: flex;
    align-items: center;
    gap: 5px;
`;

const FormLabel = styled.span`
    width: 65px;
    flex: none;
    font-size: 10px;
    color: #444;
    white-space: nowrap;
`;

const SquareButton = styled.div`
    width: 22px;
    height: 23px;
    display: flex;
    align-items: center;
    justify-content: center;
    background: ${(p) => (p.$active ? "#4f81ad" : "transparent")};
    border-radius: 2px;
`;

const WhiteList = styled.div`
    width: 273px;
    height: ${(p) => p.$h}px;
    margin-top: ${(p) => p.$top}px;
    display: flex;
    flex-direction: column;
    background: #fff;
    border: 1px solid #d4d4d4;
`;

const ListRow = styled.div`
    height: ${(p) => p.$h}px;
    flex: none;
    display: grid;
    grid-template-columns: 68px 69px 20px 1fr;
    align-items: center;
    padding-left: 1px;
    background: ${(p) => (p.$selected ? "#a9cffb" : "transparent")};
`;

const ListName = styled.span`
    font-size: 10px;
    color: #444;
    white-space: nowrap;
`;

const RedNum = styled.span`
    color: #a5504f;
`;

const ListType = styled.span`
    font-size: 10px;
    color: #444;
`;

const ListTools = styled.div`
    margin-top: auto;
    height: 25px;
    display: flex;
    align-items: center;
    gap: 15px;
    padding-left: 8px;
`;

const CheckBox = styled.div`
    width: 13px;
    height: 13px;
    display: flex;
    align-items: center;
    justify-content: center;
    margin-left: 3px;
    background: ${(p) => (p.$checked ? "#cfcfcf" : "#f4f4f4")};
    border: 1.5px solid #555;
    border-radius: 3px;
`;

const ScrollTrack = styled.div`
    position: absolute;
    right: 0;
    top: 0;
    bottom: 0;
    width: 9px;
    background: #c9c9c9;
    display: flex;
    justify-content: center;
`;

const ScrollThumb = styled.div`
    width: 6px;
    height: 241px;
    background: #8a8a8a;
    border-radius: 3px;
`;

const LoftFooter = styled.div`
    height: 36px;
    flex: none;
    display: flex;
    align-items: center;
    padding: 0 16px 0 12px;
    background: #d1d1d1;
    border-top: 1px solid #a9a9a9;
`;

const FooterButtons = styled.div`
    margin-left: auto;
    display: flex;
    gap: 10px;
`;

const DialogButton = styled.div`
    width: 59px;
    height: 19px;
    display: flex;
    align-items: center;
    justify-content: center;
    font-size: ${(p) => (p.$disabled ? "12px" : "10.5px")};
    font-family: ${(p) => (p.$disabled ? `"Open Sans", sans-serif` : JP)};
    color: ${(p) => (p.$disabled ? "#888" : "#555")};
    background: #e6e6e6;
    border: 1px solid #bdbdbd;
`;

const HoverLabel = styled.div`
    position: absolute;
    left: 523px;
    top: 127px;
    width: 65px;
    height: 24px;
    background: #bdbdbd;
`;

const HoverTip = styled.div`
    position: absolute;
    left: 16px;
    top: 8px;
    padding: 0 1px 0 2px;
    height: 16px;
    white-space: nowrap;
    font-size: 11px;
    line-height: 15px;
    color: #111;
    background: #f2f2f2;
`;

const CursorMark = styled.div`
    position: absolute;
    left: 522px;
    top: 119px;
    display: flex;
`;

const ProfileTag = styled.div`
    position: absolute;
    left: 500px;
    top: 369px;
    width: 76px;
    height: 22px;
    display: flex;
    align-items: center;
    justify-content: center;
    font-size: 10px;
    color: #444;
    background: #bcbfc5;
`;

const Timeline = styled.div`
    height: 49px;
    flex: none;
    display: flex;
    align-items: center;
    padding: 0 8px 0 11px;
    background: #cdcdcd;
`;

const PlayControls = styled.div`
    display: flex;
    gap: 12px;
`;

const TimelineTrack = styled.div`
    position: relative;
    margin-left: 17px;
    margin-right: auto;
    width: 78px;
    height: 36px;
    display: flex;
    flex-direction: column;
`;

const GroupBar = styled.div`
    width: 68px;
    height: 4px;
    margin-left: 1px;
    background: #9a9af2;
`;

const TimelineItems = styled.div`
    display: flex;
    gap: 4px;
`;

const TimelineItem = styled.div`
    width: ${(p) => (p.$active ? 24 : 20)}px;
    height: 24px;
    display: flex;
    align-items: center;
    justify-content: center;
    background: ${(p) => (p.$active ? "#4f81ad" : "transparent")};
    border-radius: 2px;
`;

const GroupBracket = styled.div`
    width: 48px;
    height: 6px;
    margin-left: 12px;
    border: 1px solid #555;
    border-top: none;
`;

const Marker = styled.div`
    position: absolute;
    left: 65px;
    top: 2px;
    display: flex;
`;
